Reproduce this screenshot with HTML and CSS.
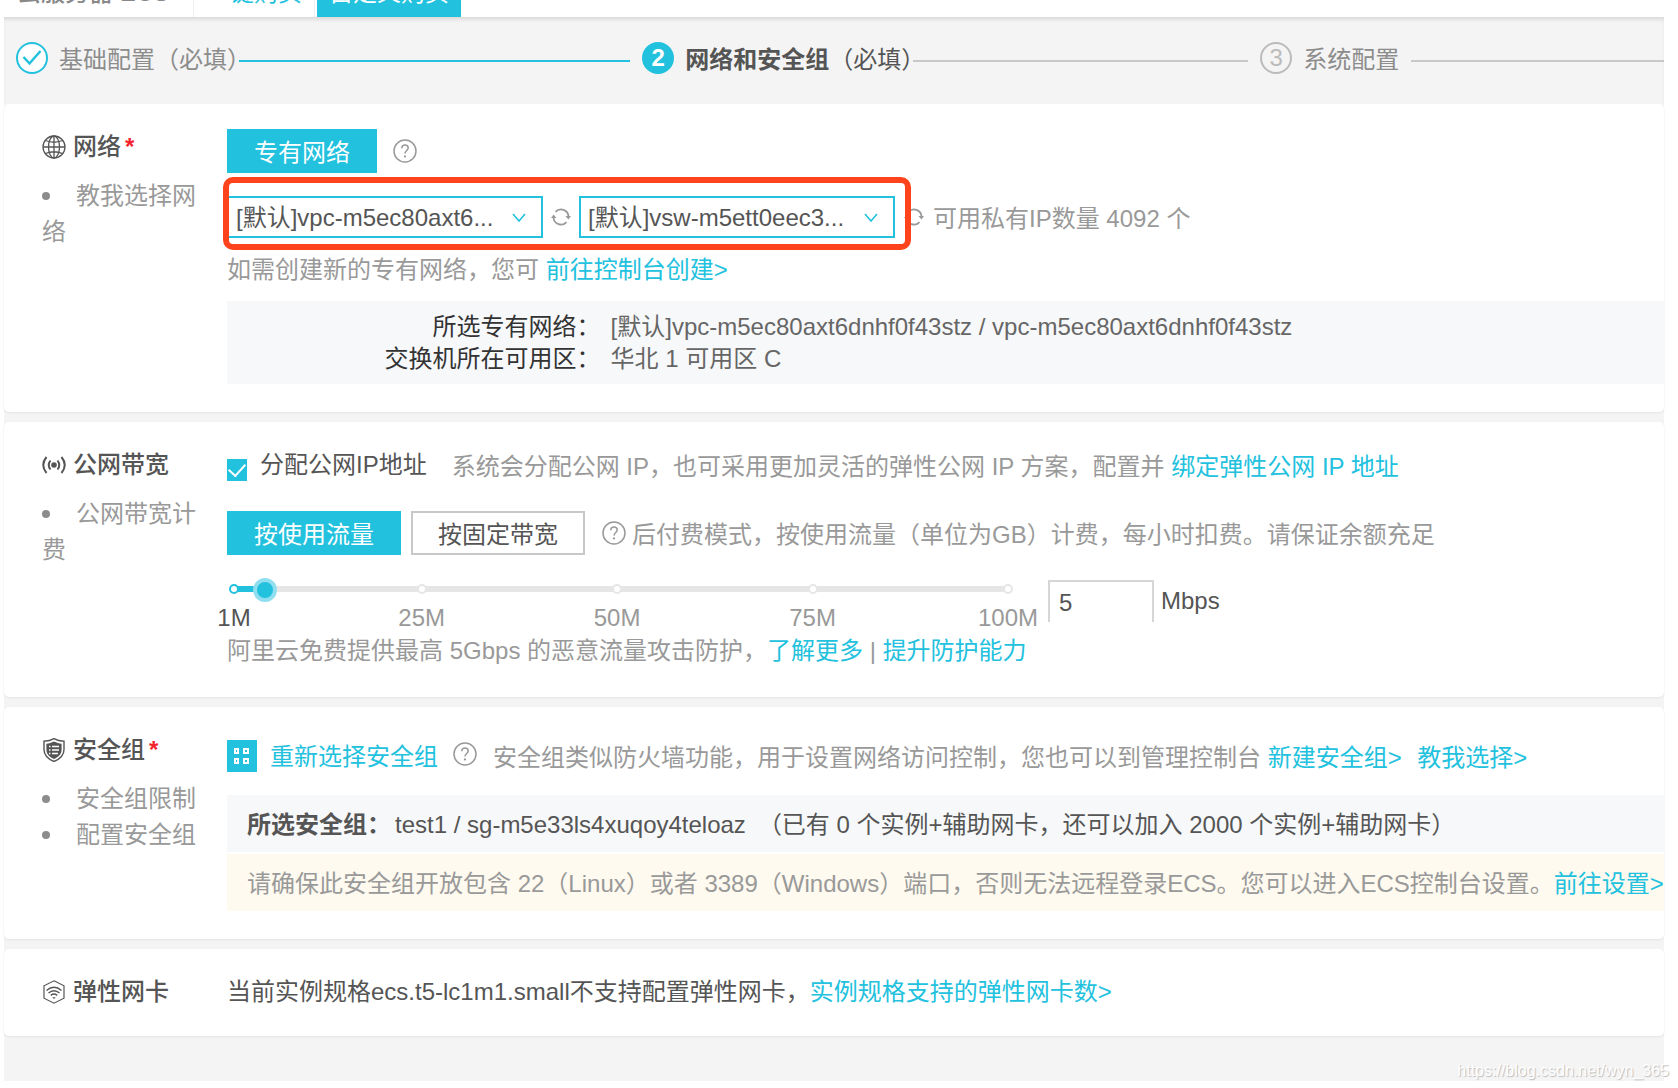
FILE: index.html
```html
<!DOCTYPE html>
<html lang="zh-CN">
<head>
<meta charset="utf-8">
<meta name="viewport" content="width=device-width, initial-scale=1">
<title>云服务器 ECS - 网络和安全组</title>
<link rel="stylesheet" href="styles.css">
</head>
<body>
<svg class="sprite" aria-hidden="true">
  <symbol id="i-help" viewBox="0 0 24 24">
    <circle cx="12" cy="12" r="11" fill="none" stroke="currentColor" stroke-width="1.5"/>
    <path d="M8.8 9.2c0-2 1.4-3.2 3.2-3.2s3.2 1.2 3.2 3c0 2.4-3.2 2.6-3.2 5.6" fill="none" stroke="currentColor" stroke-width="1.5"/>
    <circle cx="12" cy="17.4" r="1.1" fill="currentColor"/>
  </symbol>
  <symbol id="i-refresh" viewBox="0 0 20 20">
    <path d="M4.500 4.800A7.500 7.500 0 0 1 17.500 9.500M15.500 15.200A7.500 7.500 0 0 1 2.500 10.500" fill="none" stroke="currentColor" stroke-width="1.800"/>
    <path d="M14.500 9H20l-2.600 3.500zM0 11h5.500L2.600 7.500z" fill="currentColor"/>
  </symbol>
  <symbol id="i-chevron" viewBox="0 0 14 10">
    <path d="M1 1l6 7 6-7" fill="none" stroke="currentColor" stroke-width="1.600"/>
  </symbol>
</svg>

<div class="page">
  <header class="topbar">
    <h1 class="topbar-title">云服务器 ECS</h1>
    <nav class="topbar-tabs">
      <a class="tab" href="#quick">一键购买</a>
      <a class="tab tab-active" href="#custom">自定义购买</a>
    </nav>
  </header>

  <ol class="steps">
    <li class="step step-done">
      <span class="step-mark"><svg width="20" height="18" viewBox="0 0 20 18" aria-hidden="true"><path d="M1.500 8l6 6.500L18.500 2" fill="none" stroke="currentColor" stroke-width="2.500"/></svg></span>
      <span class="step-name">基础配置（必填）</span>
    </li>
    <li class="step step-current">
      <span class="step-mark">2</span>
      <span class="step-name"><strong>网络和安全组</strong>（必填）</span>
    </li>
    <li class="step step-next">
      <span class="step-mark">3</span>
      <span class="step-name">系统配置</span>
    </li>
  </ol>

  <main class="cards">
    <section class="card">
      <div class="side">
        <h2 class="side-title">
          <svg width="24" height="24" viewBox="0 0 24 24" aria-hidden="true"><g fill="none" stroke="currentColor" stroke-width="1.300"><circle cx="12" cy="12" r="11"/><ellipse cx="12" cy="12" rx="5.500" ry="11"/><path d="M12 1v22M1 12h22M3.500 5.500Q12 9 20.500 5.500M3.500 18.500Q12 15 20.500 18.500"/></g></svg>
          <span>网络</span><span class="required">*</span>
        </h2>
        <ul class="side-links"><li>教我选择网络</li></ul>
      </div>
      <div class="content">
        <div class="row row-loose">
          <button class="btn btn-primary" type="button">专有网络</button>
          <button class="icon-btn" type="button" aria-label="帮助"><svg width="24" height="24"><use href="#i-help"/></svg></button>
        </div>
        <div class="row network-row">
          <div class="network-pickers">
            <span class="picker">
              <select aria-label="专有网络"><option>[默认]vpc-m5ec80axt6...</option></select>
              <svg width="14" height="10" aria-hidden="true"><use href="#i-chevron"/></svg>
            </span>
            <button class="icon-btn" type="button" aria-label="刷新专有网络"><svg width="20" height="20"><use href="#i-refresh"/></svg></button>
            <span class="picker">
              <select aria-label="交换机"><option>[默认]vsw-m5ett0eec3...</option></select>
              <svg width="14" height="10" aria-hidden="true"><use href="#i-chevron"/></svg>
            </span>
            <span class="highlight"></span>
          </div>
          <button class="icon-btn" type="button" aria-label="刷新交换机"><svg width="20" height="20"><use href="#i-refresh"/></svg></button>
          <span class="muted">可用私有IP数量 4092 个</span>
        </div>
        <p class="muted create-note">如需创建新的专有网络，您可 <a href="#console">前往控制台创建&gt;</a></p>
        <dl class="summary">
          <dt>所选专有网络：</dt><dd>[默认]vpc-m5ec80axt6dnhf0f43stz / vpc-m5ec80axt6dnhf0f43stz</dd>
          <dt>交换机所在可用区：</dt><dd>华北 1 可用区 C</dd>
        </dl>
      </div>
    </section>

    <section class="card">
      <div class="side">
        <h2 class="side-title">
          <svg width="24" height="24" viewBox="0 0 24 24" aria-hidden="true"><circle cx="12" cy="12" r="2.800" fill="currentColor"/><path d="M8.500 7.500q-3.500 4.500 0 9M15.500 7.500q3.500 4.500 0 9M4.500 4q-6.500 8 0 16M19.500 4q6.500 8 0 16" fill="none" stroke="currentColor" stroke-width="2"/></svg>
          <span>公网带宽</span>
        </h2>
        <ul class="side-links"><li>公网带宽计费</li></ul>
      </div>
      <div class="content">
        <div class="row public-ip">
          <input class="check" type="checkbox" id="assign-ip" checked>
          <label for="assign-ip">分配公网IP地址</label>
          <span class="muted">系统会分配公网 IP，也可采用更加灵活的弹性公网 IP 方案，配置并 <a href="#eip">绑定弹性公网 IP 地址</a></span>
        </div>
        <div class="row billing">
          <button class="btn btn-primary" type="button">按使用流量</button>
          <button class="btn" type="button">按固定带宽</button>
          <span class="row billing-help">
            <button class="icon-btn" type="button" aria-label="帮助"><svg width="24" height="24"><use href="#i-help"/></svg></button>
            <span class="muted">后付费模式，按使用流量（单位为GB）计费，每小时扣费。请保证余额充足</span>
          </span>
        </div>
        <div class="bandwidth">
          <div class="slider">
            <div class="stops">
              <span class="stop stop-on"><i></i>1M</span>
              <span class="stop"><i></i>25M</span>
              <span class="stop"><i></i>50M</span>
              <span class="stop"><i></i>75M</span>
              <span class="stop"><i></i>100M</span>
            </div>
            <input class="range" type="range" min="1" max="100" value="5" aria-label="带宽峰值">
          </div>
          <label class="amount"><input type="text" value="5">Mbps</label>
        </div>
        <p class="muted protect-note">阿里云免费提供最高 5Gbps 的恶意流量攻击防护，<a href="#more">了解更多</a> | <a href="#protect">提升防护能力</a></p>
      </div>
    </section>

    <section class="card">
      <div class="side">
        <h2 class="side-title">
          <svg width="24" height="24" viewBox="0 0 24 24" aria-hidden="true"><path d="M12 .7c3 1.800 6.500 2.500 10 2.600v8.200c0 6-4 9.500-10 12-6-2.500-10-6-10-12V3.300c3.500-.1 7-.8 10-2.600z" fill="none" stroke="currentColor" stroke-width="1.400"/><path d="M12 3.500c2.600 1.300 5 2 7.600 2.200v6c0 4.500-3 7.200-7.600 9.300-4.600-2.100-7.600-4.800-7.600-9.300v-6C7 5.500 9.400 4.800 12 3.500z" fill="currentColor"/><path d="M7 8.500h1.500M10 8.500h7M7 12h1.500M10 12h7M7 15.500h1.500M10 15.500h6" stroke="#fff" stroke-width="1.500"/></svg>
          <span>安全组</span><span class="required">*</span>
        </h2>
        <ul class="side-links"><li>安全组限制</li><li>配置安全组</li></ul>
      </div>
      <div class="content">
        <div class="row group-row">
          <a class="row group-pick" href="#groups">
            <svg width="30" height="32" viewBox="0 0 30 32" aria-hidden="true"><path fill="currentColor" d="M0 0h30v32H0z"/><g fill="none" stroke="#fff" stroke-width="2"><path d="M8 9h3v4H8zM17 9h4v4h-4zM8 19h3v4H8zM17 19h4v4h-4z"/></g></svg>
            <span>重新选择安全组</span>
          </a>
          <button class="icon-btn" type="button" aria-label="帮助"><svg width="24" height="24"><use href="#i-help"/></svg></button>
          <span class="muted">安全组类似防火墙功能，用于设置网络访问控制，您也可以到管理控制台 <a href="#new">新建安全组&gt;</a> <a class="teach" href="#teach">教我选择&gt;</a></span>
        </div>
        <p class="band"><strong>所选安全组：</strong><span>test1 / sg-m5e33ls4xuqoy4teloaz</span><span>（已有 0 个实例+辅助网卡，还可以加入 2000 个实例+辅助网卡）</span></p>
        <p class="band band-warn">请确保此安全组开放包含 22（Linux）或者 3389（Windows）端口，否则无法远程登录ECS。您可以进入ECS控制台设置。<a href="#settings">前往设置&gt;</a></p>
      </div>
    </section>

    <section class="card card-line">
      <div class="side">
        <h2 class="side-title">
          <svg width="24" height="24" viewBox="0 0 24 24" aria-hidden="true"><path d="M12 .8l10 5v12.400l-10 5-10-5V5.800z" fill="none" stroke="currentColor" stroke-width="1.200"/><path d="M4.500 10.500q7.500-6.500 15 0M6.500 13q5.500-4.600 11 0M8.800 15.400q3.200-2.600 6.400 0" fill="none" stroke="currentColor" stroke-width="1.500"/><path d="M10.300 17.200h3.400L12 19z" fill="currentColor"/></svg>
          <span>弹性网卡</span>
        </h2>
      </div>
      <div class="content">
        <p class="eni">当前实例规格ecs.t5-lc1m1.small不支持配置弹性网卡，<a href="#eni">实例规格支持的弹性网卡数&gt;</a></p>
      </div>
    </section>
  </main>
  <span class="watermark">https://blog.csdn.net/wyn_365</span>
</div>
</body>
</html>
```

FILE: styles.css
```css
:root {
  --teal: #22c1de;
  --text: #555;
  --muted: #999;
  --line: #c8c8c8;
}

* { box-sizing: border-box; }

body {
  margin: 0;
  padding: 0 14px 7px 4px;
  background: #fff;
  color: var(--text);
  font-family: "Liberation Sans", "Noto Sans CJK SC", sans-serif;
  font-size: 24px;
  line-height: 32px;
}

h1, h2, p, ul, ol, dl, dd {
  margin: 0;
  padding: 0;
  font-size: inherit;
  list-style: none;
}

a { color: var(--teal); text-decoration: none; }
button, input, select { font: inherit; color: inherit; margin: 0; }
svg { display: block; flex: none; }
.sprite { position: absolute; width: 0; height: 0; }
.muted { color: var(--muted); }

.page {
  position: relative;
  min-height: calc(100vh - 7px);
  background: #f4f4f4;
}

/* Top bar: only its lower edge shows */
.topbar {
  display: flex;
  align-items: flex-end;
  height: 17px;
  overflow: hidden;
  background: #fff;
  white-space: nowrap;
}
.topbar-title {
  width: 190px;
  padding: 0 0 8px 13px;
  border-right: 1px solid #eee;
  color: #888;
  font-weight: 500;
}
.topbar-tabs { display: flex; }
.tab { padding: 0 12px 8px; border-right: 1px solid #eee; }
.tab-active { margin-left: 2px; background: var(--teal); color: #fff; border: 0; }

/* Steps */
.steps {
  display: grid;
  grid-template-columns: 38% 37.5% 1fr;
  align-items: center;
  height: 87px;
  padding: 0 0 6px 12px;
  box-shadow: inset 0 4px 4px -2px #d4d4d4;
  white-space: nowrap;
}
.step { display: flex; align-items: center; color: #8c8c8c; }
.step-mark {
  display: flex;
  align-items: center;
  justify-content: center;
  flex: none;
  width: 32px;
  height: 32px;
  margin-right: 11px;
  border: 2px solid #bbb;
  border-radius: 50%;
  color: #bbb;
}
.step-name { padding-top: 4px; }
.step::after {
  content: "";
  flex: 1;
  height: 2px;
  margin: 6px 12px 0 -12px;
  background: var(--line);
}
.step-done .step-mark { border-color: var(--teal); background: #fff; color: var(--teal); }
.step-done::after { background: var(--teal); }
.step-current { color: var(--text); }
.step-current .step-mark { border-color: var(--teal); background: var(--teal); color: #fff; font-weight: 700; }
.step-next::after { margin: 6px 0 0 12px; }

/* Cards */
.cards { display: grid; gap: 10px; }
.card {
  display: grid;
  grid-template-columns: 185px minmax(0, 1fr);
  padding: 25px 0 28px 38px;
  border-radius: 5px;
  background: #fff;
  box-shadow: 0 1px 2px #e4e4e4;
}
.card-line { padding-bottom: 26px; }
.content { white-space: nowrap; }

.side-title {
  display: flex;
  align-items: center;
  gap: 7px;
  height: 36px;
  font-weight: 500;
}
.required { margin-left: -3px; color: #f5222d; font-weight: 700; }
.side-links {
  width: 158px;
  margin-top: 13px;
  color: var(--muted);
  line-height: 36px;
}
.side-links li::before {
  content: "";
  display: inline-block;
  width: 8px;
  height: 8px;
  margin-right: 26px;
  border-radius: 50%;
  background: #8c8c8c;
  vertical-align: 4px;
}

.row { display: flex; align-items: center; }
.row > .muted { padding-top: 4px; }
.row-loose { gap: 16px; }

.btn {
  height: 44px;
  padding: 4px 25px 0;
  border: 2px solid var(--line);
  background: #fff;
}
.btn-primary { border-color: var(--teal); background: var(--teal); color: #fff; }
.icon-btn { padding: 0; border: 0; background: none; color: var(--muted); }

/* Network */
.network-row { gap: 9px; margin-top: 23px; }
.network-pickers { position: relative; display: flex; align-items: center; gap: 8px; }
.picker { display: grid; align-items: center; width: 316px; }
.picker select {
  grid-area: 1 / 1;
  height: 42px;
  padding: 2px 7px 0;
  border: 2px solid var(--teal);
  border-radius: 0;
  background: #fff;
  appearance: none;
}
.picker svg {
  grid-area: 1 / 1;
  justify-self: end;
  margin: 2px 17px 0 0;
  color: var(--teal);
  pointer-events: none;
}
.highlight {
  position: absolute;
  inset: -19px -16px -12px -4px;
  border: 6px solid #ff431c;
  border-radius: 10px;
  pointer-events: none;
}
.create-note { margin-top: 16px; }
.summary {
  display: grid;
  grid-template-columns: 26% 1fr;
  column-gap: 10px;
  margin-top: 15px;
  padding: 10px 0 9px;
  background: #f7f8fa;
}
.summary dt { color: #333; text-align: right; }
.summary dd { color: #666; }

/* Public bandwidth */
.public-ip { height: 36px; }
.check {
  appearance: none;
  width: 20px;
  height: 22px;
  margin: 10px 13px 0 0;
  background: var(--teal);
  display: grid;
  place-items: center;
}
.check:checked::before {
  content: "";
  width: 8px;
  height: 14px;
  margin-bottom: 4px;
  border: solid #fff;
  border-width: 0 2px 2px 0;
  transform: rotate(42deg);
}
.public-ip label { margin-right: 25px; }
.billing { gap: 10px; margin-top: 28px; }
.billing-help { gap: 6px; margin-left: 7px; }

.bandwidth { display: flex; align-items: flex-start; margin-top: 22px; }
.slider {
  display: grid;
  width: 798px;
  height: 58px;
  margin: 0 28px 0 -5px;
}
.stops {
  grid-area: 1 / 1;
  display: grid;
  grid-template-columns: 24fr 25fr 25fr 25fr 0;
  height: 24px;
  margin: 0 12px;
  background:
    linear-gradient(var(--teal), var(--teal)) 0 9px / 4% 6px no-repeat,
    linear-gradient(#e6e6e6, #e6e6e6) 0 9px / 100% 6px no-repeat;
}
.stop {
  display: flex;
  flex-direction: column;
  align-items: center;
  width: 0;
  color: var(--muted);
}
.stop i {
  flex: none;
  width: 10px;
  height: 10px;
  margin: 7px 0 8px;
  border: 2px solid #e6e6e6;
  border-radius: 50%;
  background: #fff;
}
.stop-on { color: var(--text); }
.stop-on i { border-color: var(--teal); }
.range {
  grid-area: 1 / 1;
  width: 100%;
  height: 26px;
  appearance: none;
  background: none;
}
.range::-webkit-slider-thumb {
  appearance: none;
  width: 24px;
  height: 24px;
  border: 4px solid #8fdff0;
  border-radius: 50%;
  background: var(--teal);
}
.amount { display: flex; align-items: center; gap: 7px; margin-top: 3px; }
.amount input {
  width: 106px;
  height: 42px;
  padding: 2px 9px 0;
  border: 2px solid #d6d6d6;
  border-bottom: 0;
  background: #fff;
}
.protect-note { margin-bottom: 2px; }

/* Security group */
.group-row { height: 44px; margin-top: 2px; }
.group-row .icon-btn { margin-bottom: 4px; }
.group-pick { gap: 13px; margin-right: 15px; }
.group-pick span { padding-top: 2px; }
.group-row .muted { margin-left: 16px; }
.teach { margin-left: 9px; }
.band {
  display: flex;
  align-items: center;
  height: 57px;
  margin-top: 2px;
  padding: 2px 0 0 20px;
  background: #f7f8fa;
}
.group-row + .band { margin-top: 17px; }
.band strong { margin-right: 4px; }
.band span + span { margin-left: 12px; }
.band-warn { background: #fefaef; color: var(--muted); }

.eni { line-height: 36px; }

.watermark {
  position: absolute;
  right: -5px;
  bottom: 0;
  font-size: 16px;
  line-height: 20px;
  color: #fff;
  text-shadow: 1px 1px 1px #bbb;
}
```
